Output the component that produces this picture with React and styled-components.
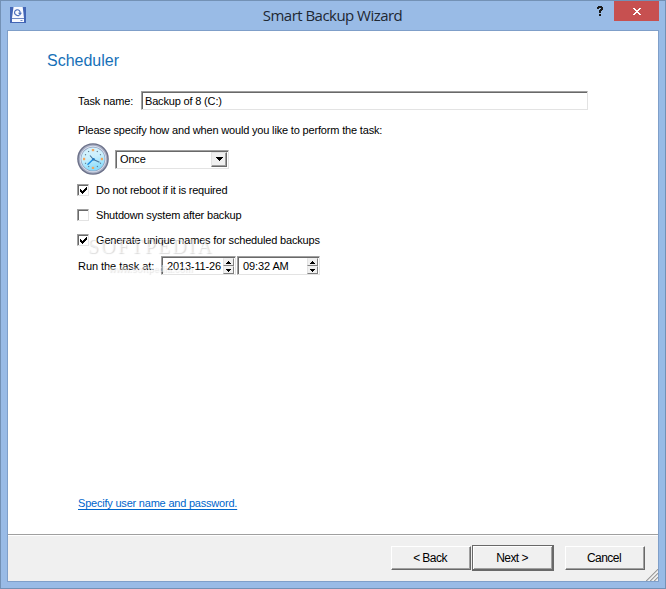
import styled, { createGlobalStyle } from "styled-components";

const GlobalStyle = createGlobalStyle`
  * {
    box-sizing: border-box;
  }

  body {
    margin: 0;
    overflow: hidden;
  }
`;

const Window = styled.div`
  width: 666px;
  height: 589px;
  padding: 0 6px 6px;
  display: flex;
  flex-direction: column;
  background-color: #99bbe6;
  border: 1px solid #7391b5;
  font-family: "Liberation Sans", Arial, sans-serif;
  font-size: 11px;
  line-height: 14px;
  color: #000;
`;

const TitleBar = styled.header`
  display: grid;
  grid-template-columns: 19px 1fr 18px 45px;
  height: 29px;
  flex: none;
`;

const AppIcon = styled.svg`
  margin: 6px 0 0 3px;
`;

const Title = styled.h1`
  margin: 0 0 0 43px;
  font: 400 15px/29px "Open Sans", "Noto Sans", sans-serif;
  letter-spacing: -0.53px;
  text-align: center;
  color: #1e2833;
`;

const HelpButton = styled.svg`
  margin: 5px 0 0 1px;
`;

const CloseButton = styled.button`
  display: flex;
  align-items: center;
  justify-content: center;
  width: 45px;
  height: 20px;
  padding: 0;
  border: 0;
  background-color: #c75050;
`;

const Client = styled.div`
  flex: 1;
  display: flex;
  flex-direction: column;
  border: 1px solid #7f9fc9;
  background-color: #fff;
`;

const Page = styled.main`
  position: relative;
  flex: 1;
  display: flex;
  flex-direction: column;
  padding: 20px 69px 24px 70px;
`;

const Heading = styled.h2`
  margin: 0 0 21px -31px;
  font-size: 16px;
  font-weight: 400;
  line-height: 19px;
  color: #1670b8;
`;

const Text = styled.span`
  white-space: nowrap;
  letter-spacing: ${(props) => props.$spacing ?? -0.17}px;
`;

const FieldLabel = styled(Text)`
  width: ${(props) => props.$width}px;
`;

const Row = styled.div`
  display: flex;
  align-items: center;
  height: ${(props) => props.$height}px;
  margin-top: ${(props) => props.$top || 0}px;
`;

const Sunken = styled.div`
  display: flex;
  align-items: center;
  width: ${(props) => props.$width}px;
  height: 19px;
  padding-left: ${(props) => props.$indent || 3}px;
  background-color: #fff;
  border: 1px solid;
  border-color: #a0a0a0 #e3e3e3 #e3e3e3 #a0a0a0;
  box-shadow: inset 1px 1px 0 #696969;

  & + & {
    margin-left: 1px;
  }
`;

const DropButton = styled.span`
  display: flex;
  align-items: center;
  justify-content: center;
  width: 16px;
  height: 15px;
  margin: 0 1px 0 auto;
  background-color: #f0f0f0;
  border: 1px solid;
  border-color: #e3e3e3 #696969 #696969 #e3e3e3;
  box-shadow: inset -1px -1px 0 #a0a0a0;
`;

const Spinner = styled.span`
  display: flex;
  flex-direction: column;
  width: 11px;
  margin: 1px 1px 0 auto;
`;

const SpinButton = styled.span`
  display: flex;
  align-items: center;
  justify-content: center;
  height: 8px;
  background-color: #f0f0f0;
  border: 1px solid;
  border-color: #f0f0f0 #808080 #808080 #e3e3e3;
`;

const CheckList = styled.div`
  display: flex;
  flex-direction: column;
  gap: 13px;
  margin: 9px 0 10px -1px;
`;

const CheckLabel = styled.label`
  display: flex;
  align-items: center;
  gap: 7px;
  height: 12px;
`;

const CheckBox = styled.span`
  display: flex;
  width: 12px;
  height: 12px;
  background-color: #fff;
  border: 1px solid;
  border-color: #a0a0a0 #e3e3e3 #e3e3e3 #a0a0a0;
  box-shadow: inset 1px 1px 0 #696969;
`;

const Link = styled.a`
  align-self: flex-start;
  margin-top: auto;
  line-height: 13px;
  color: #0066cc;
  letter-spacing: -0.21px;
  text-decoration: underline;
  text-underline-offset: 2px;
`;

const Watermark = styled.div`
  position: absolute;
  left: 79px;
  top: 205px;
  width: 127px;
  text-align: center;
  pointer-events: none;
  font-family: "Liberation Serif", serif;
  color: rgba(255, 255, 255, 0.55);
  text-shadow: 1px 1px 1px rgba(0, 0, 0, 0.15);
`;

const WatermarkName = styled.div`
  font-size: 20px;
  line-height: 20px;
  letter-spacing: 2px;
`;

const WatermarkUrl = styled.div`
  margin-top: 6px;
  font: bold 9px/14px "Liberation Sans", sans-serif;
  text-shadow: 1px 1px 1px rgba(0, 0, 0, 0.1);
`;

const Footer = styled.footer`
  position: relative;
  display: flex;
  align-items: center;
  justify-content: flex-end;
  height: 47px;
  padding-right: 13px;
  background-color: #f0f0f0;
  border-top: 1px solid #a0a0a0;
  box-shadow: inset 0 1px 0 #fff;
`;

const PushButton = styled.button`
  width: ${(props) => (props.$primary ? 82 : 80)}px;
  height: ${(props) => (props.$primary ? 26 : 24)}px;
  margin: 0 ${(props) => (props.$primary ? 11 : 1)}px 0 0;
  padding: 0 2px 1px 0;
  font: inherit;
  font-size: 12px;
  letter-spacing: -0.55px;
  color: #000;
  background-color: #f0f0f0;
  border: 1px solid;
  border-color: ${(props) =>
    props.$primary ? "#696969" : "#fff #696969 #696969 #fff"};
  box-shadow: ${(props) =>
    props.$primary
      ? "inset -1px -1px 0 #696969, inset 1px 1px 0 #fff, inset -2px -2px 0 #a0a0a0"
      : "inset -1px -1px 0 #a0a0a0"};

  &:last-of-type {
    margin-right: 0;
  }
`;

const Grip = styled.svg`
  position: absolute;
  right: 0;
  bottom: 0;
`;

const ClockIcon = styled.svg`
  margin: 0 6px 0 -1px;
`;

const hours = [0, 30, 60, 90, 120, 150, 180, 210, 240, 270, 300, 330];

const Clock = () => (
  <ClockIcon width="32" height="32" viewBox="0 0 32 32">
    <defs>
      <linearGradient id="face" x1="0" y1="0" x2="0.3" y2="1">
        <stop offset="0" stopColor="#d8f2fc" />
        <stop offset="0.5" stopColor="#ccf0fd" />
        <stop offset="1" stopColor="#8addfc" />
      </linearGradient>
    </defs>
    <circle cx="16" cy="16" r="15.8" fill="#6b7088" />
    <circle cx="16" cy="16" r="14.4" fill="#a4abc0" />
    <circle cx="16" cy="16" r="13.2" fill="#dde2ee" />
    <circle cx="16" cy="16" r="12.3" fill="#8c9fbe" />
    <circle cx="16" cy="16" r="11.6" fill="url(#face)" />
    {hours.map((angle) => (
      <rect
        key={angle}
        x={angle % 90 ? 15.4 : 14.8}
        y={angle % 90 ? 6.8 : 6}
        width={angle % 90 ? 1.1 : 2.4}
        height={angle % 90 ? 1.1 : 2.2}
        fill={angle % 90 ? "#5c7286" : "#f2a65e"}
        transform={`rotate(${angle} 16 16)`}
      />
    ))}
    <path d="M13 12.5 16.5 16.5 22.5 19.2" fill="none" stroke="#47769c" strokeWidth="1.1" />
    <path d="M17 15.5 10.5 21.8" stroke="#1d8fe6" strokeWidth="1.5" />
    <circle cx="16.5" cy="16.3" r="1.3" fill="#287ac0" />
  </ClockIcon>
);

const Arrow = ({ up, size = 5 }) => {
  const height = (size + 1) / 2;
  const d = up
    ? `M0 ${height}H${size}V${height - 1}L${size / 2} 0 0 ${height - 1}z`
    : `M0 0H${size}V1L${size / 2} ${height} 0 1z`;
  return (
    <svg width={size} height={height} shapeRendering="crispEdges">
      <path d={d} />
    </svg>
  );
};

const SpinField = ({ value, width, indent, spacing }) => (
  <Sunken $width={width} $indent={indent}>
    <Text $spacing={spacing}>{value}</Text>
    <Spinner>
      <SpinButton>
        <Arrow up />
      </SpinButton>
      <SpinButton>
        <Arrow />
      </SpinButton>
    </Spinner>
  </Sunken>
);

const options = [
  { label: "Do not reboot if it is required", checked: true, spacing: -0.22 },
  { label: "Shutdown system after backup", checked: false, spacing: -0.18 },
  { label: "Generate unique names for scheduled backups", checked: true, spacing: -0.17 },
];

const App = () => {
  return (
    <>
      <GlobalStyle />
      <Window>
        <TitleBar>
          <AppIcon width="16" height="16" viewBox="0 0 16 16">
            <path d="M0 0h16v16H0z" fill="#4265b5" />
            <path d="M3.5 0h9.2L14 11v4H2v-4z" fill="#f7f9ff" />
            <path d="M2 11.5h12M10.5 13.5h2" stroke="#7089c4" />
            <path d="M5.2 7.4A2.8 2.8 0 1 1 10 6.4M5.4 7a2.8 2.8 0 0 0 4 1.2" fill="none" stroke="#4d6fbc" strokeWidth="1.2" />
            <path d="M8 5.8h4L10 8.4z" fill="#4d6fbc" />
          </AppIcon>
          <Title>Smart Backup Wizard</Title>
          <HelpButton width="8" height="11" viewBox="0 0 8 11" shapeRendering="crispEdges">
            <path d="M1 0h4v1h1v3H5v1H4v2H2V4h1V3h1V2H2v1H0V1h1zM2 8h2v2H2z" fill="#1b1b1b" />
          </HelpButton>
          <CloseButton>
            <svg width="8" height="7" viewBox="0 0 8 7" shapeRendering="crispEdges">
              <path d="M0 0h2v1h1v1h2V1h1V0h2v1H7v1H6v1H5v1h1v1h1v1h1v1H6V6H5V5H3v1H2v1H0V6h1V5h1V4h1V3H2V2H1V1H0z" fill="#fff" />
            </svg>
          </CloseButton>
        </TitleBar>
        <Client>
          <Page>
            <Heading>Scheduler</Heading>
            <Row $height={19}>
              <FieldLabel $width={63} $spacing={-0.1}>Task name:</FieldLabel>
              <Sunken $width={447}>
                <Text>Backup of 8 (C:)</Text>
              </Sunken>
            </Row>
            <Row $height={14} $top={13}>
              <Text>Please specify how and when would you like to perform the task:</Text>
            </Row>
            <Row $height={32} $top={6}>
              <Clock />
              <Sunken $width={114} $indent={4}>
                <Text>Once</Text>
                <DropButton>
                  <Arrow size={7} />
                </DropButton>
              </Sunken>
            </Row>
            <CheckList>
              {options.map((option) => (
                <CheckLabel key={option.label}>
                  <CheckBox>
                    {option.checked && (
                      <svg width="10" height="10" viewBox="0 0 10 10" shapeRendering="crispEdges">
                        <path d="M2 4h1v1h1v1h1V5h1V4h1V3h1V2h1v3H8v1H7v1H6v1H5v1H4V8H3V7H2z" />
                      </svg>
                    )}
                  </CheckBox>
                  <Text $spacing={option.spacing}>{option.label}</Text>
                </CheckLabel>
              ))}
            </CheckList>
            <Row $height={19}>
              <FieldLabel $width={83} $spacing={-0.05}>Run the task at:</FieldLabel>
              <SpinField value="2013-11-26" width={75} indent={5} spacing={-0.15} />
              <SpinField value="09:32 AM" width={83} indent={5} spacing={-0.1} />
            </Row>
            <Watermark>
              <WatermarkName>SOFTPEDIA</WatermarkName>
              <WatermarkUrl>www.softpedia.com</WatermarkUrl>
            </Watermark>
            <Link>Specify user name and password.</Link>
          </Page>
          <Footer>
            <PushButton>&lt; Back</PushButton>
            <PushButton $primary>Next &gt;</PushButton>
            <PushButton>Cancel</PushButton>
            <Grip width="13" height="13" viewBox="0 0 13 13">
              <path d="M1 13 13 1M5 13l8-8M9 13l4-4" stroke="#a0a0a0" strokeWidth="1.5" />
              <path d="M0 13 13 0M4 13l9-9M8 13l5-5" stroke="#fff" strokeWidth="0.6" />
            </Grip>
          </Footer>
        </Client>
      </Window>
    </>
  );
};

export default App;
